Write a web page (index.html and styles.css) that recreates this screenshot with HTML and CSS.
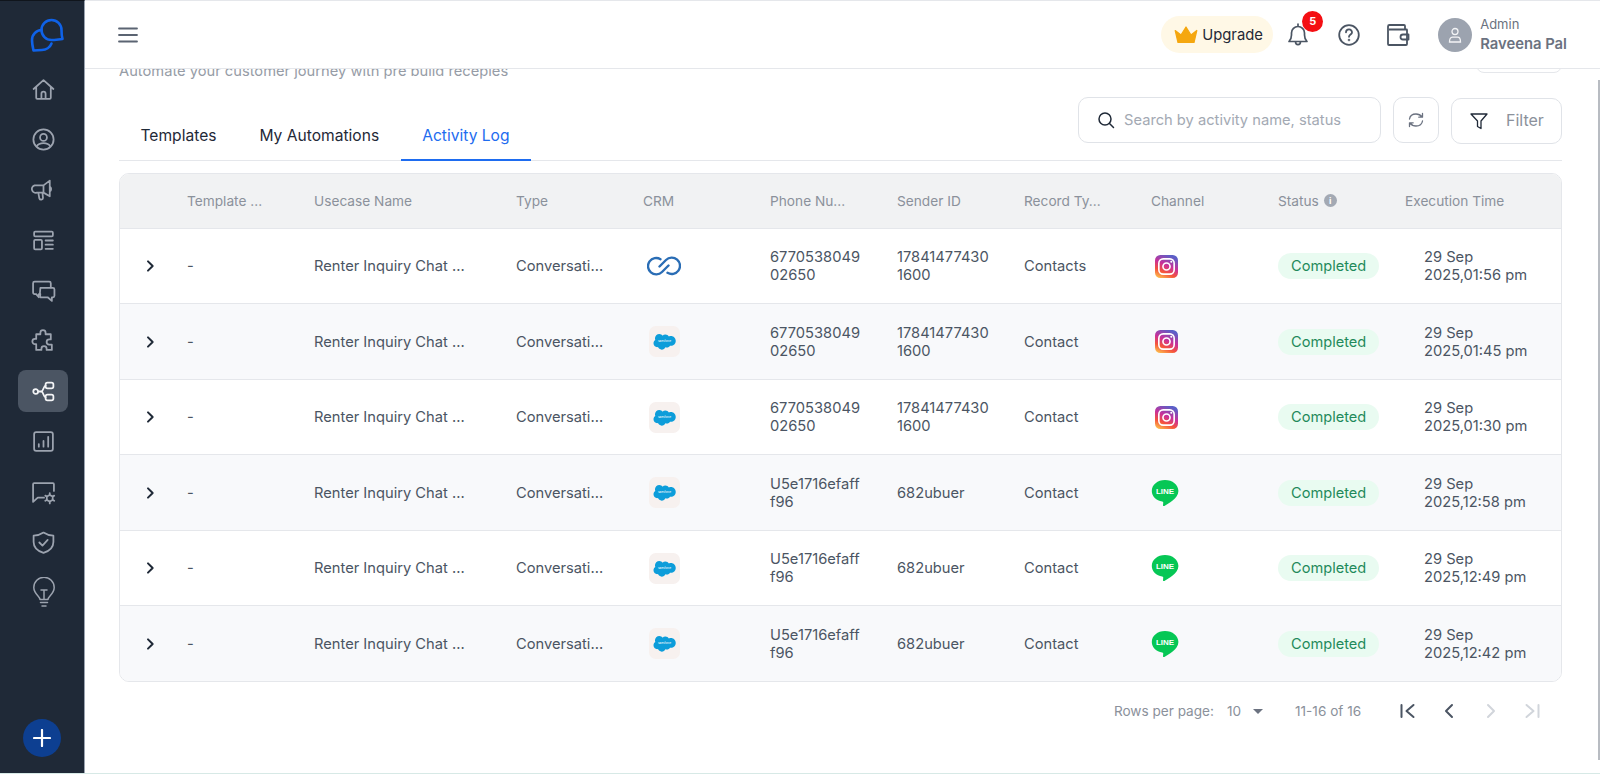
FILE: index.html
```html
<!DOCTYPE html>
<html lang="en">
<head>
<meta charset="utf-8">
<title>Activity Log</title>
<link rel="stylesheet" href="styles.css">
</head>
<body>
<svg class="defs" width="0" height="0" aria-hidden="true">
  <defs>
    <linearGradient id="ig" x1="0.15" y1="1" x2="0.6" y2="0">
      <stop offset="0" stop-color="#fdc04e"/>
      <stop offset="0.3" stop-color="#f5533c"/>
      <stop offset="0.6" stop-color="#c9309a"/>
      <stop offset="1" stop-color="#5b5fc7"/>
    </linearGradient>
    <symbol id="chev" viewBox="0 0 24 24"><path d="M9 5 16 12 9 19" fill="none" stroke="#1f2937" stroke-width="3" stroke-linecap="round" stroke-linejoin="round"/></symbol>
    <symbol id="zoho" viewBox="0 0 34 22"><g fill="none" stroke="#2a6db5" stroke-width="2.400" stroke-linecap="round"><path d="M13.500 4.200A8.200 8.200 0 1 0 15 17l6.500-6.500"/><path d="M20.500 17.800A8.200 8.200 0 1 0 19 5l-6.500 6.500"/></g></symbol>
    <symbol id="sf" viewBox="0 0 32 32"><rect width="32" height="32" rx="7" fill="#f7f1ef"/><path transform="translate(16 16) scale(.8) translate(-16 -17)" d="M13.400 9.600c1-1 2.300-1.600 3.800-1.600 1.900 0 3.600 1 4.500 2.600.8-.4 1.700-.6 2.600-.6 3.500 0 6.200 2.800 6.200 6.300s-2.800 6.300-6.200 6.300c-.4 0-.8 0-1.200-.1-.8 1.400-2.300 2.400-4 2.400-.7 0-1.400-.2-2-.5-.8 1.800-2.600 3.100-4.700 3.100-2.200 0-4-1.400-4.800-3.300-.3.1-.7.1-1 .1-2.700 0-4.800-2.200-4.800-4.900 0-1.800 1-3.400 2.400-4.200-.3-.7-.5-1.500-.5-2.300 0-3.100 2.500-5.600 5.700-5.600 1.800 0 3.300.9 4.200 2.200z" fill="#0d9dda"/><text x="16" y="16.800" text-anchor="middle" class="sf-text">salesforce</text></symbol>
    <symbol id="insta" viewBox="0 0 24 24"><rect width="24" height="24" rx="5.500" fill="url(#ig)"/><rect x="4" y="4" width="16" height="16" rx="4.500" fill="none" stroke="#fff" stroke-width="1.700"/><circle cx="12" cy="12" r="3.700" fill="none" stroke="#fff" stroke-width="1.700"/><circle cx="17" cy="7" r="1.100" fill="#fff"/></symbol>
    <symbol id="line" viewBox="0 0 28 28"><path d="M14 1C6.600 1 .8 5.800.8 11.900c0 5.200 4.500 9.600 10.400 10.600.8.200 1.200.7 1 1.600l-.2 2.100c0 .8.600 1.200 1.400.7 3.400-2 14-7.500 14-14.900C27.400 5.800 21.500 1 14 1z" fill="#06c755"/><text x="14" y="14.800" text-anchor="middle" class="line-text">LINE</text></symbol>
  </defs>
</svg>

<div class="app">
  <aside class="sidebar">
    <div class="logo">
      <svg width="36" height="36" viewBox="0 0 36 36" fill="none" stroke="#0f62e8" stroke-width="2.600" stroke-linejoin="round" stroke-linecap="round"><path d="M31.500 13a10 10 0 1 0-10 10c3 0 6-.5 11-1-1-3-1-6-1-9z"/><path d="M11.500 13A10 10 0 0 0 2 23c0 3 .5 6 1.500 10.500 3.500-.5 6-.5 8.500-.5 4 0 8-2.500 9.500-6.500"/></svg>
    </div>
    <nav class="nav">
      <a class="nav-item"><svg viewBox="0 0 24 24"><path d="M2.500 11.500 12 3l9.500 8.500M5 9.500V20a1 1 0 0 0 1 1h12a1 1 0 0 0 1-1V9.500M10 21v-5a2 2 0 0 1 4 0v5"/></svg></a>
      <a class="nav-item"><svg viewBox="0 0 24 24"><circle cx="12" cy="12" r="9.700"/><circle cx="12" cy="10" r="3.300"/><path d="M5.500 18.500c1.200-2 3.600-3 6.500-3s5.300 1 6.500 3"/></svg></a>
      <a class="nav-item"><svg viewBox="0 0 24 24"><path d="M3.500 8h8.500l6-4.500v15L12 15H5.500a3.500 3.500 0 0 1-2-7zM7 15l1 5.500a1.800 1.800 0 0 0 3.500-.5l-.5-5M18 9a3 3 0 0 1 0 5M12 8v7"/></svg></a>
      <a class="nav-item"><svg viewBox="0 0 24 24"><rect x="3" y="3.500" width="18" height="4.500" rx="1"/><rect x="3" y="11.500" width="7.500" height="9" rx="1"/><path d="M14 12h7M14 16h7M14 20h7"/></svg></a>
      <a class="nav-item"><svg viewBox="0 0 24 24"><path d="M19 9V5a1.500 1.500 0 0 0-1.500-1.500h-14A1.500 1.500 0 0 0 2 5v9a1.500 1.500 0 0 0 1.500 1.500H5l2.500 3V15.500H9"/><path d="M9 9.500h12a1.500 1.500 0 0 1 1.500 1.500v6a1.500 1.500 0 0 1-1.500 1.500h-1V22l-4-3.500H9c-.5-3-.5-6 0-9z"/></svg></a>
      <a class="nav-item"><svg viewBox="0 0 24 24"><path d="M9 4.500a2.500 2.500 0 0 1 5 0V6h5v5h-1.500a2.500 2.500 0 0 0 0 5H20v5h-5v-1a2.500 2.500 0 0 0-5 0v1H5v-5.500H3.800a2.500 2.500 0 0 1 0-5H5V6h4z"/></svg></a>
      <a class="nav-item nav-active"><svg viewBox="0 0 24 24"><circle cx="4.500" cy="12" r="2.300"/><rect x="14" y="3.500" width="7.500" height="5.500" rx="1.800"/><rect x="14" y="15" width="7.500" height="5.500" rx="1.800"/><path d="M7 12h3M10 12c2-.2 2-5.500 4-5.700M10 12c2 .2 2 5.500 4 5.700"/></svg></a>
      <a class="nav-item"><svg viewBox="0 0 24 24"><rect x="3" y="3" width="18" height="18" rx="2"/><path d="M7.500 17v-2.500M12 17v-5.500M16.500 17V7.500"/></svg></a>
      <a class="nav-item"><svg viewBox="0 0 24 24"><path d="M12.500 17H6.500L2 21V4a1 1 0 0 1 1-1h18a1 1 0 0 1 1 1v6.500"/><path d="m18 14.300 2.800 1.600v3.200L18 20.700l-2.800-1.600v-3.200z"/><path d="M18 12.500v1.800M18 20.700v1.800M13.700 15l1.500.9M20.800 19.100l1.500.9M13.700 20l1.500-.9M20.800 15.900l1.500-.9"/></svg></a>
      <a class="nav-item"><svg viewBox="0 0 24 24"><path d="M12 2.500c3 2 6 3 9.500 3v6c0 5-3.800 8.700-9.500 10.500C6.300 20.200 2.500 16.500 2.500 11.500v-6c3.500 0 6.500-1 9.500-3z"/><path d="m8 12 3 3 5-5.500"/></svg></a>
      <a class="nav-item nav-bulb"><svg viewBox="0 0 24 32"><path d="M8 22.500c0-3.500-6.200-5.500-6.200-12a10.200 10.200 0 0 1 20.400 0c0 6.500-6.200 8.500-6.200 12zM8.500 25.500h7M10 29h4M9 13h6M12 13v9.500"/></svg></a>
    </nav>
    <button class="add" type="button"><svg width="18" height="18" viewBox="0 0 18 18"><path d="M9 1v16M1 9h16" stroke="#fff" stroke-width="2.200" stroke-linecap="round"/></svg></button>
  </aside>

  <div class="main">
    <header class="topbar">
      <button class="menu" type="button"><svg width="22" height="18" viewBox="0 0 22 18"><path d="M2 2.500h18M2 9h18M2 15.500h18" stroke="#5b6472" stroke-width="1.800" stroke-linecap="round"/></svg></button>
      <div class="top-actions">
        <div class="upgrade">
          <svg width="24" height="18" viewBox="0 0 24 18"><path d="M4 16.500 1.200 4.500l5.800 4.500L12 1l5 8 5.800-4.500L20 16.500z" fill="#f5a70f" stroke="#f5a70f" stroke-width="1.200" stroke-linejoin="round"/></svg>
          <span>Upgrade</span>
        </div>
        <div class="bell">
          <svg width="24" height="26" viewBox="0 0 24 26" fill="none" stroke="#4b5563" stroke-width="1.700" stroke-linecap="round" stroke-linejoin="round"><path d="M3 19.500c1.600-1.500 2.500-3 2.500-6.500v-2a6.500 6.500 0 0 1 13 0v2c0 3.500.9 5 2.500 6.500zM9.500 19.500c0 2 1 3.200 2.500 3.200s2.500-1.200 2.500-3.200M12 2v2.500"/></svg>
          <span class="badge">5</span>
        </div>
        <svg class="help" width="24" height="24" viewBox="0 0 24 24" fill="none" stroke="#4b5563" stroke-width="1.800" stroke-linecap="round"><circle cx="12" cy="12" r="9.800"/><path d="M9 9.300A3 3 0 0 1 15 9.500c0 2-3 2.200-3 4.300"/><circle cx="12" cy="17" r=".4"/></svg>
        <svg class="wallet" width="24" height="24" viewBox="0 0 24 24" fill="none" stroke="#4b5563" stroke-width="1.800" stroke-linejoin="round"><path d="M19 6.500V3a1 1 0 0 0-1-1H3.500A1.500 1.500 0 0 0 2 3.500V21a1 1 0 0 0 1 1h17a1 1 0 0 0 1-1V7a.5.5 0 0 0-.5-.5H3"/><path d="M22.500 11.500H17a2.500 2.500 0 0 0 0 5h5.500z"/></svg>
        <div class="user">
          <span class="avatar"><svg width="18" height="18" viewBox="0 0 18 18" fill="none" stroke="#f3f4f6" stroke-width="1.300"><circle cx="9" cy="5.500" r="3"/><path d="M3.500 16c0-3 .8-4.800 3-4.800h5c2.200 0 3 1.800 3 4.800z"/></svg></span>
          <div class="user-text">
            <span class="user-role">Admin</span>
            <span class="user-name">Raveena Pal</span>
          </div>
        </div>
      </div>
    </header>

    <main class="content">
      <div class="clipped-head">
        <p class="subtitle">Automate your customer journey with pre build recepies</p>
        <span class="clipped-btn"></span>
      </div>

      <div class="toolbar">
        <div class="tabs">
          <a class="tab">Templates</a>
          <a class="tab">My Automations</a>
          <a class="tab tab-active">Activity Log</a>
        </div>
        <div class="tools">
          <div class="search">
            <svg width="18" height="18" viewBox="0 0 18 18" fill="none" stroke="#1f2937" stroke-width="1.500" stroke-linecap="round"><circle cx="8" cy="8" r="6"/><path d="m12.500 12.500 4 4"/></svg>
            <span>Search by activity name, status</span>
          </div>
          <button class="refresh" type="button"><svg width="18" height="18" viewBox="0 0 18 18" fill="none" stroke="#6b7280" stroke-width="1.300" stroke-linecap="round" stroke-linejoin="round"><path d="M2.500 8C3 5 5.500 3 9 3c2.500 0 4.700 1.200 6.200 3M15.500 2.500v3.700h-3.700M15.500 10c-.5 3-3 5-6.500 5-2.500 0-4.700-1.200-6.200-3M2.500 15.500v-3.700h3.700"/></svg></button>
          <button class="filter" type="button">
            <svg width="18" height="18" viewBox="0 0 18 18" fill="none" stroke="#1f2937" stroke-width="1.300" stroke-linejoin="round"><path d="M1 2h16l-6 7v7.500l-3.500-2V9z"/></svg>
            <span class="filter-label">Filter</span>
          </button>
        </div>
      </div>

      <div class="table-wrap">
        <table class="log">
          <colgroup>
            <col class="c-exp"><col class="c-std"><col class="c-wide"><col class="c-std"><col class="c-std"><col class="c-std"><col class="c-std"><col class="c-std"><col class="c-std"><col class="c-std"><col>
          </colgroup>
          <thead>
            <tr>
              <th></th><th>Template ...</th><th>Usecase Name</th><th>Type</th><th>CRM</th><th>Phone Nu...</th><th>Sender ID</th><th>Record Ty...</th><th>Channel</th>
              <th><span class="status-h">Status <i class="info">i</i></span></th><th>Execution Time</th>
            </tr>
          </thead>
          <tbody>
            <tr>
              <td class="exp"><svg class="ic16"><use href="#chev"/></svg></td><td>-</td><td>Renter Inquiry Chat ...</td><td>Conversati...</td>
              <td><svg class="zoho"><use href="#zoho"/></svg></td>
              <td>6770538049<br>02650</td><td>17841477430<br>1600</td><td>Contacts</td>
              <td><svg class="ic-ch"><use href="#insta"/></svg></td>
              <td><span class="pill">Completed</span></td><td class="time">29 Sep<br>2025,01:56 pm</td>
            </tr>
            <tr>
              <td class="exp"><svg class="ic16"><use href="#chev"/></svg></td><td>-</td><td>Renter Inquiry Chat ...</td><td>Conversati...</td>
              <td><svg class="sf"><use href="#sf"/></svg></td>
              <td>6770538049<br>02650</td><td>17841477430<br>1600</td><td>Contact</td>
              <td><svg class="ic-ch"><use href="#insta"/></svg></td>
              <td><span class="pill">Completed</span></td><td class="time">29 Sep<br>2025,01:45 pm</td>
            </tr>
            <tr>
              <td class="exp"><svg class="ic16"><use href="#chev"/></svg></td><td>-</td><td>Renter Inquiry Chat ...</td><td>Conversati...</td>
              <td><svg class="sf"><use href="#sf"/></svg></td>
              <td>6770538049<br>02650</td><td>17841477430<br>1600</td><td>Contact</td>
              <td><svg class="ic-ch"><use href="#insta"/></svg></td>
              <td><span class="pill">Completed</span></td><td class="time">29 Sep<br>2025,01:30 pm</td>
            </tr>
            <tr>
              <td class="exp"><svg class="ic16"><use href="#chev"/></svg></td><td>-</td><td>Renter Inquiry Chat ...</td><td>Conversati...</td>
              <td><svg class="sf"><use href="#sf"/></svg></td>
              <td>U5e1716efaff<br>f96</td><td>682ubuer</td><td>Contact</td>
              <td><svg class="ic-line"><use href="#line"/></svg></td>
              <td><span class="pill">Completed</span></td><td class="time">29 Sep<br>2025,12:58 pm</td>
            </tr>
            <tr>
              <td class="exp"><svg class="ic16"><use href="#chev"/></svg></td><td>-</td><td>Renter Inquiry Chat ...</td><td>Conversati...</td>
              <td><svg class="sf"><use href="#sf"/></svg></td>
              <td>U5e1716efaff<br>f96</td><td>682ubuer</td><td>Contact</td>
              <td><svg class="ic-line"><use href="#line"/></svg></td>
              <td><span class="pill">Completed</span></td><td class="time">29 Sep<br>2025,12:49 pm</td>
            </tr>
            <tr>
              <td class="exp"><svg class="ic16"><use href="#chev"/></svg></td><td>-</td><td>Renter Inquiry Chat ...</td><td>Conversati...</td>
              <td><svg class="sf"><use href="#sf"/></svg></td>
              <td>U5e1716efaff<br>f96</td><td>682ubuer</td><td>Contact</td>
              <td><svg class="ic-line"><use href="#line"/></svg></td>
              <td><span class="pill">Completed</span></td><td class="time">29 Sep<br>2025,12:42 pm</td>
            </tr>
          </tbody>
        </table>
      </div>

      <div class="pager">
        <span>Rows per page:</span>
        <span class="rows">10 <i class="caret"></i></span>
        <span class="range">11-16 of 16</span>
        <div class="pager-btns">
          <svg viewBox="0 0 20 20" stroke="#4b5563"><path d="M3.500 4v12M15.500 4l-7 6 7 6"/></svg>
          <svg viewBox="0 0 20 20" stroke="#4b5563"><path d="M13 4l-6 6 6 6"/></svg>
          <svg viewBox="0 0 20 20" stroke="#d1d5db"><path d="M7 4l6 6-6 6"/></svg>
          <svg viewBox="0 0 20 20" stroke="#d1d5db"><path d="M16.500 4v12M4.500 4l7 6-7 6"/></svg>
        </div>
      </div>
    </main>
  </div>
  <div class="scrollbar"></div>
</div>
</body>
</html>
```
FILE: styles.css
```css
* { box-sizing: border-box; }
html, body { height: 100%; }
body {
  margin: 0;
  font-family: Inter, "Liberation Sans", sans-serif;
  background: #fff;
  color: #374151;
  overflow: hidden;
}
.defs { position: absolute; }
.sf-text { font: 2.800px Inter, sans-serif; fill: #fff; }
.line-text { font: 800 8px "Liberation Sans", sans-serif; fill: #fff; }

.app {
  display: flex;
  height: 774px;
  border-bottom: 1px solid #d7e9e6;
}

/* sidebar */
.sidebar {
  width: 85px;
  flex: none;
  display: flex;
  flex-direction: column;
  align-items: center;
  background: #1f2937;
  border-right: 1px solid #9aa3b0;
  border-top: 1px solid #10151c;
  padding: 0 0 16px 2px;
}
.logo {
  height: 67px;
  padding-left: 10px;
  display: flex;
  align-items: center;
  justify-content: center;
}
.nav { display: flex; flex-direction: column; gap: 8.400px; align-items: center; }
.nav-item {
  width: 50px;
  height: 42px;
  border-radius: 8px;
  display: flex;
  align-items: center;
  justify-content: center;
}
.nav-item svg {
  width: 25px;
  height: 25px;
  fill: none;
  stroke: #9ca3af;
  stroke-width: 1.700;
  stroke-linecap: round;
  stroke-linejoin: round;
  flex: none;
}
.nav-active { background: #4b5563; }
.nav-item.nav-active svg { stroke: #f3f4f6; }
.nav-item.nav-bulb svg { width: 24px; height: 32px; margin-left: 2px; stroke-width: 1.500; }
.add {
  margin-top: auto;
  margin-right: 2px;
  width: 38px;
  height: 38px;
  border: 0;
  border-radius: 50%;
  background: #0d3f91;
  display: flex;
  align-items: center;
  justify-content: center;
  padding: 0;
  flex: none;
}

/* top bar */
.main { flex: 1; min-width: 0; display: flex; flex-direction: column; }
.topbar {
  height: 69px;
  flex: none;
  border-top: 1px solid #e5e7eb;
  border-bottom: 1px solid #e5e7eb;
  display: flex;
  align-items: center;
  justify-content: space-between;
  padding: 0 33px 0 32px;
}
.menu { border: 0; background: none; padding: 0; display: flex; }
.top-actions { display: flex; align-items: center; }
.upgrade {
  width: 112px;
  height: 37px;
  border-radius: 19px;
  background: #fff8e6;
  display: flex;
  align-items: center;
  gap: 4px;
  padding-left: 13px;
  font-size: 14.800px;
  color: #1f2937;
}
.bell { margin-left: 13px; display: flex; position: relative; }
.badge {
  position: absolute;
  top: -11px;
  left: 16px;
  width: 21px;
  height: 21px;
  border-radius: 50%;
  background: #f40f13;
  color: #fff;
  font-size: 11px;
  font-weight: 700;
  display: flex;
  align-items: center;
  justify-content: center;
}
.help { margin-left: 27px; }
.wallet { margin-left: 25px; }
.user { display: flex; align-items: center; gap: 8px; margin-left: 28px; }
.avatar {
  width: 34px;
  height: 34px;
  border-radius: 50%;
  background: #9ca3af;
  display: flex;
  align-items: center;
  justify-content: center;
}
.user-text { display: flex; flex-direction: column; gap: 3px; }
.user-role { font-size: 13px; line-height: 16px; color: #6b7280; }
.user-name { font-size: 14.800px; line-height: 18px; font-weight: 600; color: #6b7280; white-space: nowrap; }

/* content */
.content { padding: 0 38px 0 34px; flex: 1; min-height: 0; }
.clipped-head {
  height: 11px;
  display: flex;
  align-items: flex-end;
  justify-content: space-between;
  overflow: hidden;
}
.subtitle {
  margin: 0;
  flex: none;
  font-size: 14.700px;
  line-height: 17px;
  color: #969ca6;
}
.clipped-btn {
  width: 86px;
  height: 20px;
  margin-bottom: 7px;
  border: 1px solid #e5e7eb;
  border-radius: 8px;
  align-self: flex-end;
}

.toolbar {
  margin-top: 17px;
  height: 64px;
  display: flex;
  justify-content: space-between;
  align-items: flex-start;
  border-bottom: 1px solid #e5e7eb;
}
.tabs { display: flex; height: 64px; }
.tab {
  padding: 0 21.500px;
  line-height: 78px;
  height: 64px;
  font-size: 15.600px;
  color: #1f2937;
}
.tab-active {
  color: #1e6cf0;
  border-bottom: 2px solid #1e6cf0;
}
.tools { display: flex; gap: 12px; margin-top: 0; }
.search {
  width: 303px;
  height: 46px;
  border: 1px solid #e0e3e8;
  border-radius: 10px;
  display: flex;
  align-items: center;
  gap: 9px;
  padding-left: 18px;
  font-size: 14.700px;
  color: #a3a9b3;
}
.refresh {
  width: 46px;
  height: 46px;
  border: 1px solid #e0e3e8;
  border-radius: 10px;
  background: #fff;
  padding: 0;
  display: flex;
  align-items: center;
  justify-content: center;
}
.filter {
  width: 111px;
  height: 46px;
  margin-top: 1px;
  border: 1px solid #e0e3e8;
  border-radius: 10px;
  background: #fff;
  display: flex;
  align-items: center;
  gap: 18px;
  padding: 0 0 0 18px;
  font: 16px Inter, sans-serif;
  color: #8b919b;
}
.filter-label { padding-bottom: 2px; }

/* table */
.table-wrap {
  margin-top: 12px;
  border: 1px solid #e5e7eb;
  border-radius: 10px;
  overflow: hidden;
}
.log { width: 100%; border-collapse: collapse; table-layout: fixed; }
.c-exp { width: 51px; }
.c-std { width: 127px; }
.c-wide { width: 202px; }
.log th {
  height: 54.400px;
  background: #f1f2f3;
  text-align: left;
  font-weight: 400;
  font-size: 13.700px;
  color: #8b919b;
  padding: 0 0 0 16px;
  border-bottom: 1px solid #e5e7eb;
}
.status-h { display: inline-flex; align-items: center; gap: 5px; }
.info {
  width: 13px;
  height: 13px;
  border-radius: 50%;
  background: #a3a9b3;
  color: #fff;
  font: 700 9px/13px Inter, sans-serif;
  text-align: center;
}
.log td {
  height: 75.500px;
  padding: 0 0 0 16px;
  font-size: 14.700px;
  line-height: 18px;
  color: #4b5563;
  border-bottom: 1px solid #e5e7eb;
  vertical-align: middle;
}
.log tbody tr:last-child td { border-bottom: 0; }
.log tbody tr:nth-child(even) td { background: #f8f9fb; }
.log td.exp { padding: 0 0 0 22px; }
.ic16 { width: 16px; height: 16px; display: block; }
.zoho { width: 34px; height: 22px; display: block; margin-left: 4px; }
.sf { width: 31px; height: 31px; display: block; margin-left: 6px; }
.ic-ch { width: 23px; height: 23px; display: block; margin-left: 4px; }
.ic-line { width: 28px; height: 28px; display: block; }
.pill {
  display: inline-block;
  height: 26px;
  line-height: 26px;
  padding: 0 13px;
  border-radius: 13px;
  background: #e9fbf1;
  color: #1f8a5b;
  font-size: 14.600px;
}
.log td.time { padding-left: 35px; }

/* pager */
.pager {
  height: 58px;
  display: flex;
  align-items: center;
  justify-content: flex-end;
  font-size: 13.600px;
  color: #8b919b;
}
.rows { margin-left: 13px; display: inline-flex; align-items: center; gap: 12px; }
.caret {
  width: 0;
  height: 0;
  border: 5px solid transparent;
  border-top-color: #6b7280;
  border-bottom: 0;
}
.range { margin-left: 32px; }
.pager-btns { display: flex; gap: 21.300px; margin-left: 37px; margin-right: 20px; }
.pager-btns svg {
  width: 20px;
  height: 20px;
  fill: none;
  stroke-width: 2;
  stroke-linecap: round;
  stroke-linejoin: round;
}

.scrollbar {
  position: absolute;
  top: 80px;
  right: 0;
  width: 2px;
  height: 680px;
  background: #b8bcc2;
}
```
